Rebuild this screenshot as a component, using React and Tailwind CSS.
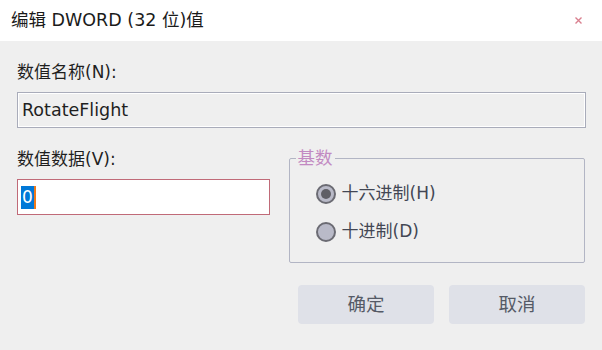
import React, { useState } from 'react';

const font = { fontFamily: '"DejaVu Sans", "Noto Sans CJK SC", sans-serif' };

const Radio = ({ checked, label, onSelect }) => (
  <label className="flex items-center h-[24px] cursor-default" onClick={onSelect}>
    <span className="w-[20px] h-[20px] rounded-full border-2 border-[#6b6b73] bg-[#b9bac8] flex items-center justify-center">
      {checked && <span className="w-[10px] h-[10px] rounded-full bg-[#5f5f66]" />}
    </span>
    <span className="ml-[6px] text-[17px] text-[#434754]">{label}</span>
  </label>
);

export default function App() {
  const [base, setBase] = useState('hex');

  return (
    <div className="w-[602px] h-[350px] bg-[#efefef] overflow-hidden" style={font}>
      {/* title bar */}
      <div className="h-[41px] bg-white flex items-center justify-between pl-[11px] pr-[20px]">
        <span className="text-[17.5px] text-[#1b1b1b] leading-none">编辑 DWORD (32 位)值</span>
        <svg width="7" height="7" viewBox="0 0 7 7" className="mt-[-1px]">
          <path d="M0.5 0.5 L6.5 6.5 M6.5 0.5 L0.5 6.5" stroke="#d9808f" strokeWidth="1.4" />
        </svg>
      </div>

      <div className="px-[17px] pt-[20px]">
        <div className="h-[22px] leading-[22px] text-[17px] text-[#1f1f1f]">数值名称(N):</div>
        <div className="mt-[9px] h-[36px] w-[569px] border border-[#a9acba] shadow-[inset_0_0_0_1px_#ffffff] flex items-center pl-[4px] text-[17.5px] text-[#1f1f1f]">
          RotateFlight
        </div>

        <div className="mt-[20px] flex gap-[19px]">
          <div className="w-[253px]">
            <div className="h-[22px] leading-[22px] text-[17px] text-[#1f1f1f]">数值数据(V):</div>
            <div className="mt-[9px] h-[36px] border border-[#c06a78] bg-white flex items-center pl-[3px]">
              <span className="h-[23px] bg-[#0078d7] text-white text-[17px] leading-[23px] px-[1px] border-r-2 border-[#f07a1a]">0</span>
            </div>
          </div>

          <fieldset className="w-[297px] h-[114px] border border-[#b2b5c4] rounded-[2px] pl-[26px] mt-[1px]">
            <legend className="-ml-[20px] px-[2px] text-[17.5px] leading-[18px] text-[#c28ac2]">基数</legend>
            <div className="mt-[15px] flex flex-col gap-[14px]">
              <Radio checked={base === 'hex'} label="十六进制(H)" onSelect={() => setBase('hex')} />
              <Radio checked={base === 'dec'} label="十进制(D)" onSelect={() => setBase('dec')} />
            </div>
          </fieldset>
        </div>

        <div className="mt-[22px] flex justify-end gap-[15px]">
          <button className="w-[136px] h-[39px] rounded-[4px] bg-[#dfe1e8] text-[18.5px] text-[#555a66]">确定</button>
          <button className="w-[136px] h-[39px] rounded-[4px] bg-[#dfe1e8] text-[18.5px] text-[#555a66]">取消</button>
        </div>
      </div>
    </div>
  );
}
